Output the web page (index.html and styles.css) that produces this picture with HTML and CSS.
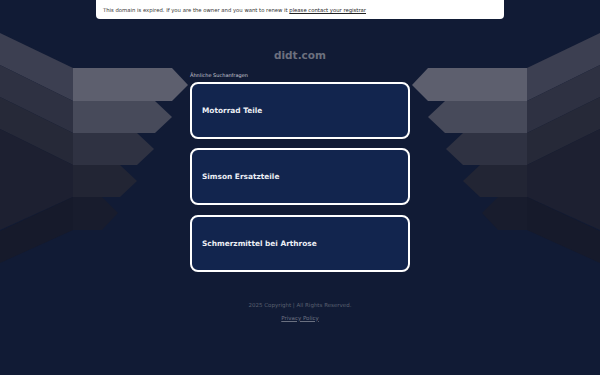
FILE: index.html
```html
<!DOCTYPE html>
<html lang="de">
<head>
<meta charset="utf-8">
<title>didt.com</title>
<link rel="stylesheet" href="styles.css">
</head>
<body>
<div class="page">
  <div class="banner">This domain is expired. If you are the owner and you want to renew it <a href="#" class="banner-link">please contact your registrar</a></div>
  <div class="stage">
    <svg class="decor" viewBox="0 19 190 260" width="190" height="260" aria-hidden="true">
      <polygon points="0,33 73,68 73,101 0,65" fill="#3c3f51"/>
      <polygon points="0,65 73,101 73,133 0,97" fill="#2e3142"/>
      <polygon points="0,97 73,133 73,165 0,129" fill="#262938"/>
      <polygon points="0,129 73,165 73,197 0,230" fill="#1d2031"/>
      <polygon points="0,231 73,197 73,230 0,263" fill="#161a2b"/>
      <polygon points="73,68 172,68 188,85 172,101 73,101" fill="#5d5f6e"/>
      <polygon points="73,101 155,101 172,117 155,133 73,133" fill="#474a5a"/>
      <polygon points="73,133 137,133 154,149 137,165 73,165" fill="#2f3242"/>
      <polygon points="73,165 120,165 137,181 120,197 73,197" fill="#222534"/>
      <polygon points="73,197 102,197 118,213 102,230 73,230" fill="#181c2d"/>
    </svg>
    <main class="center">
      <h1 class="domain">didt.com</h1>
      <p class="related">Ähnliche Suchanfragen</p>
      <ul class="cards">
        <li><a href="#" class="card">Motorrad Teile</a></li>
        <li><a href="#" class="card">Simson Ersatzteile</a></li>
        <li><a href="#" class="card">Schmerzmittel bei Arthrose</a></li>
      </ul>
      <footer class="footer">
        <p class="copy">2025 Copyright | All Rights Reserved.</p>
        <a href="#" class="privacy">Privacy Policy</a>
      </footer>
    </main>
    <svg class="decor decor-right" viewBox="0 19 190 260" width="190" height="260" aria-hidden="true">
      <polygon points="0,33 73,68 73,101 0,65" fill="#3c3f51"/>
      <polygon points="0,65 73,101 73,133 0,97" fill="#2e3142"/>
      <polygon points="0,97 73,133 73,165 0,129" fill="#262938"/>
      <polygon points="0,129 73,165 73,197 0,230" fill="#1d2031"/>
      <polygon points="0,231 73,197 73,230 0,263" fill="#161a2b"/>
      <polygon points="73,68 172,68 188,85 172,101 73,101" fill="#5d5f6e"/>
      <polygon points="73,101 155,101 172,117 155,133 73,133" fill="#474a5a"/>
      <polygon points="73,133 137,133 154,149 137,165 73,165" fill="#2f3242"/>
      <polygon points="73,165 120,165 137,181 120,197 73,197" fill="#222534"/>
      <polygon points="73,197 102,197 118,213 102,230 73,230" fill="#181c2d"/>
    </svg>
  </div>
</div>
</body>
</html>
```
FILE: styles.css
```css
* { box-sizing: border-box; }
html, body { margin: 0; padding: 0; }
body {
  width: 600px;
  height: 375px;
  overflow: hidden;
  background: #111b35;
  font-family: "DejaVu Sans", "Noto Sans", sans-serif;
}
.page { display: flex; flex-direction: column; align-items: center; }
.banner {
  width: 408px;
  height: 19px;
  background: #ffffff;
  border-radius: 0 0 4px 4px;
  padding-left: 7px;
  font-size: 5.3px;
  line-height: 20px;
  color: #333333;
}
.banner-link { color: #222222; text-decoration: underline; }
.stage {
  display: grid;
  grid-template-columns: 190px 220px 190px;
  width: 600px;
}
.decor { display: block; }
.decor-right { transform: scaleX(-1); }
.center { display: flex; flex-direction: column; padding-top: 29px; }
.domain {
  margin: 0;
  text-align: center;
  font-size: 10.5px;
  line-height: 14px;
  font-weight: bold;
  color: #6c707e;
}
.related {
  margin: 10px 0 2.5px;
  font-size: 5px;
  line-height: 7px;
  color: #c9ccd6;
}
.cards {
  list-style: none;
  margin: 0;
  padding: 0;
  display: flex;
  flex-direction: column;
  gap: 9.5px;
}
.card {
  display: flex;
  align-items: center;
  height: 57px;
  padding-left: 10px;
  border: 2px solid #ffffff;
  border-radius: 8px;
  background: #12254e;
  color: #eceef4;
  font-size: 7.4px;
  font-weight: bold;
  text-decoration: none;
}
.footer {
  margin-top: 29px;
  display: flex;
  flex-direction: column;
  align-items: center;
  gap: 5px;
}
.copy {
  margin: 0;
  font-size: 5.5px;
  line-height: 8px;
  color: #5a6070;
}
.privacy {
  font-size: 5.5px;
  line-height: 8px;
  color: #6a7080;
  text-decoration: underline;
}
```
